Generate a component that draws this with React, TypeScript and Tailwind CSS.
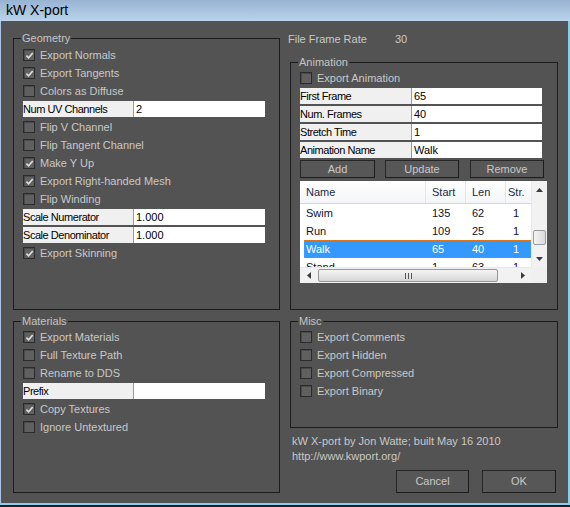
import React from "react";

const font = { fontFamily: '"Liberation Sans", Arial, sans-serif' };

function Check({ on, label }: { on?: boolean; label: string }) {
  return (
    <div className="h-[18px] flex items-center gap-[5px]">
      <span className="w-[12px] h-[12px] border border-[#2b2b2b] bg-[#606060] shadow-[inset_1px_1px_0_#4a4a4a] flex items-center justify-center">
        {on && (
          <svg viewBox="0 0 10 10" className="w-[9px] h-[9px]">
            <path d="M1.6 5.2 L4 7.6 L8.6 2.2" stroke="#dcdcdc" strokeWidth="1.9" fill="none" />
          </svg>
        )}
      </span>
      <span className="text-[11px] text-[#c8c8c8] leading-none">{label}</span>
    </div>
  );
}

function Field({ label, value, lw }: { label: string; value: string; lw: string }) {
  return (
    <div className="h-[18px] flex items-center">
      <div className="h-[16px] w-[242px] flex text-[11px] leading-[16px] text-black">
        <div className={`${lw} bg-[#f0f0f0] tracking-[-0.45px] whitespace-nowrap`}>{label}</div>
        <div className="flex-1 bg-white border-l border-[#9a9a9a] pl-[2px]">{value}</div>
      </div>
    </div>
  );
}

function Btn({ children, w, h }: { children: React.ReactNode; w: string; h: string }) {
  return (
    <div
      className={`${w} ${h} border border-[#262626] border-r-[#1c1c1c] border-b-[#1c1c1c] bg-[#575757] flex items-center justify-center text-[11px] text-[#c8c8c8]`}
    >
      {children}
    </div>
  );
}

function Arrow({ dir }: { dir: "up" | "down" | "left" | "right" }) {
  const pts =
    dir === "up"
      ? "0,4 3.5,0 7,4"
      : dir === "down"
      ? "0,0 7,0 3.5,4"
      : dir === "left"
      ? "4,0 4,7 0,3.5"
      : "0,0 0,7 4,3.5";
  const vb = dir === "up" || dir === "down" ? "0 0 7 4" : "0 0 4 7";
  const cls = dir === "up" || dir === "down" ? "w-[7px] h-[4px]" : "w-[4px] h-[7px]";
  return (
    <svg viewBox={vb} className={cls}>
      <polygon points={pts} fill="#3c3c3c" />
    </svg>
  );
}

const rows = [
  { name: "Swim", start: "135", len: "62", str: "1" },
  { name: "Run", start: "109", len: "25", str: "1" },
  { name: "Walk", start: "65", len: "40", str: "1", sel: true },
  { name: "Stand", start: "1", len: "63", str: "1" },
];

function AnimList() {
  return (
    <div className="w-[247px] h-[102px] bg-white flex flex-col text-[11px]">
      <div className="flex h-[86px]">
        <div className="w-[231px] shrink-0 overflow-hidden">
          <div className="h-[23px] w-[260px] flex border-b border-[#d5d5d5] bg-gradient-to-b from-white to-[#f3f5f8] text-[#1a2a44] leading-[22px]">
            <div className="w-[126px] shrink-0 pl-[6px] border-r border-[#e4e6ea]">Name</div>
            <div className="w-[40px] shrink-0 pl-[6px] border-r border-[#e4e6ea]">Start</div>
            <div className="w-[40px] shrink-0 pl-[6px] border-r border-[#e4e6ea]">Len</div>
            <div className="w-[40px] shrink-0 pl-[2px]">Str.</div>
          </div>
          {rows.map((r) => (
            <div key={r.name} className="h-[18px] pl-[4px] flex">
              <div
                className={`flex w-[227px] shrink-0 leading-[16px] ${
                  r.sel
                    ? "bg-[#3399ff] text-white border border-dotted border-[#e07a1f]"
                    : "text-[#10102a] border border-transparent"
                }`}
              >
                <div className="w-[121px] shrink-0 pl-[1px]">{r.name}</div>
                <div className="w-[40px] shrink-0 pl-[6px]">{r.start}</div>
                <div className="w-[40px] shrink-0 pl-[6px]">{r.len}</div>
                <div className="w-[25px] shrink-0 pl-[7px]">{r.str}</div>
              </div>
            </div>
          ))}
        </div>
        <div className="w-[16px] shrink-0 bg-[#f2f2f2] flex flex-col items-center border-l border-[#e8e8e8]">
          <div className="h-[17px] flex items-center justify-center">
            <Arrow dir="up" />
          </div>
          <div className="flex-1 w-full px-[1px]">
            <div className="mt-[32px] h-[15px] rounded-[2px] border border-[#9c9c9c] bg-gradient-to-r from-[#f4f4f4] to-[#dadada]" />
          </div>
          <div className="h-[17px] flex items-center justify-center">
            <Arrow dir="down" />
          </div>
        </div>
      </div>
      <div className="flex h-[16px]">
        <div className="w-[231px] shrink-0 bg-[#f2f2f2] flex items-center border-t border-[#e8e8e8]">
          <div className="w-[17px] flex justify-center">
            <Arrow dir="left" />
          </div>
          <div className="flex-1 h-full py-[1px]">
            <div className="ml-[1px] w-[180px] h-full rounded-[2px] border border-[#979797] bg-gradient-to-b from-[#f5f5f5] to-[#d6d6d6] flex items-center justify-center gap-[2px]">
              <span className="w-[1px] h-[6px] bg-[#555]" />
              <span className="w-[1px] h-[6px] bg-[#555]" />
              <span className="w-[1px] h-[6px] bg-[#555]" />
            </div>
          </div>
          <div className="w-[17px] flex justify-center">
            <Arrow dir="right" />
          </div>
        </div>
        <div className="w-[16px] bg-[#f0f0f0]" />
      </div>
    </div>
  );
}

function Group({ title, h, children }: { title: string; h: string; children: React.ReactNode }) {
  return (
    <fieldset className={`${h} border border-[#1c1c1c] pl-[9px]`}>
      <legend className="-ml-[2px] px-[1px] text-[11px] leading-[14px] text-[#c4c4c4]">{title}</legend>
      {children}
    </fieldset>
  );
}

export default function App() {
  return (
    <div style={font} className="w-[570px] h-[507px] bg-[#1e1e1e] overflow-hidden">
      <div className="h-[21px] bg-gradient-to-b from-[#98b3d2] to-[#bbd3eb] pl-[6px] text-[14px] leading-[21px] text-black">
        kW X-port
      </div>
      <div className="h-[484px] bg-[#535353] border-l border-l-[#a8c6e6] border-r-2 border-r-[#86cdef] border-b-2 border-b-[#86cdef] flex pl-[12px]">
        <div className="w-[267px] pt-[10px] flex flex-col">
          <Group title="Geometry" h="h-[279px]">
            <div className="pt-[1px]">
              <Check on label="Export Normals" />
              <Check on label="Export Tangents" />
              <Check label="Colors as Diffuse" />
              <Field label="Num UV Channels" value="2" lw="w-[110px]" />
              <Check label="Flip V Channel" />
              <Check label="Flip Tangent Channel" />
              <Check on label="Make Y Up" />
              <Check on label="Export Right-handed Mesh" />
              <Check label="Flip Winding" />
              <Field label="Scale Numerator" value="1.000" lw="w-[110px]" />
              <Field label="Scale Denominator" value="1.000" lw="w-[110px]" />
              <Check on label="Export Skinning" />
            </div>
          </Group>
          <div className="mt-[4px]">
            <Group title="Materials" h="h-[179px]">
              <Check on label="Export Materials" />
              <Check label="Full Texture Path" />
              <Check label="Rename to DDS" />
              <Field label="Prefix" value="" lw="w-[110px]" />
              <Check on label="Copy Textures" />
              <Check label="Ignore Untextured" />
            </Group>
          </div>
        </div>
        <div className="w-[268px] ml-[10px] flex flex-col">
          <div className="mt-[11px] h-[15px] -ml-[2px] flex text-[11px] leading-[15px] text-[#c8c8c8]">
            <span className="w-[107px]">File Frame Rate</span>
            <span>30</span>
          </div>
          <div className="mt-[8px]">
            <Group title="Animation" h="h-[255px]">
              <Check label="Export Animation" />
              <Field label="First Frame" value="65" lw="w-[111px]" />
              <Field label="Num. Frames" value="40" lw="w-[111px]" />
              <Field label="Stretch Time" value="1" lw="w-[111px]" />
              <Field label="Animation Name" value="Walk" lw="w-[111px]" />
              <div className="mt-[1px] flex">
                <Btn w="w-[75px]" h="h-[18px]">Add</Btn>
                <div className="ml-[10px]">
                  <Btn w="w-[74px]" h="h-[18px]">Update</Btn>
                </div>
                <div className="ml-[11px]">
                  <Btn w="w-[74px]" h="h-[18px]">Remove</Btn>
                </div>
              </div>
              <div className="mt-[3px]">
                <AnimList />
              </div>
            </Group>
          </div>
          <div className="mt-[4px]">
            <Group title="Misc" h="h-[114px]">
              <Check label="Export Comments" />
              <Check label="Export Hidden" />
              <Check label="Export Compressed" />
              <Check label="Export Binary" />
            </Group>
          </div>
          <div className="mt-[6px] ml-[2px] text-[11px] leading-[15px] text-[#c8c8c8]">
            <div>kW X-port by Jon Watte; built May 16 2010</div>
            <div>http://www.kwport.org/</div>
          </div>
          <div className="mt-[6px] flex justify-end gap-[13px] pr-[2px]">
            <Btn w="w-[73px]" h="h-[23px]">Cancel</Btn>
            <Btn w="w-[74px]" h="h-[23px]">OK</Btn>
          </div>
        </div>
      </div>
    </div>
  );
}
